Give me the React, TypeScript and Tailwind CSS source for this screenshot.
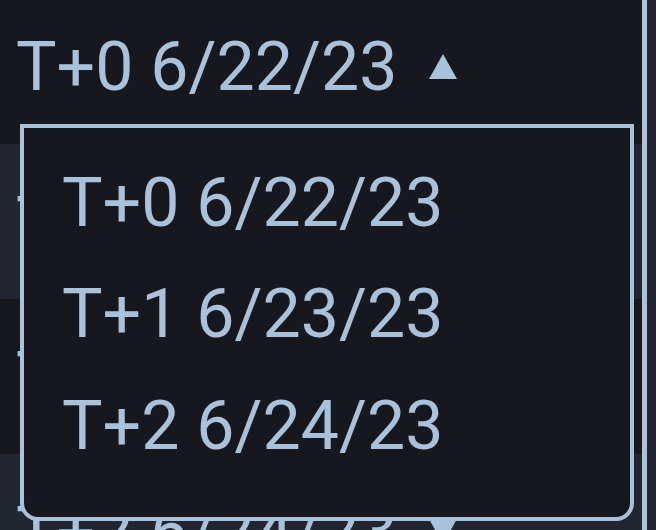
import React from "react";

const rows = [
  { label: "T+0 6/22/23", open: true },
  { label: "T+0 6/22/23", open: false },
  { label: "T+1 6/23/23", open: false },
  { label: "T+2 6/24/23", open: false },
];

const options = ["T+0 6/22/23", "T+1 6/23/23", "T+2 6/24/23"];

const Caret: React.FC<{ up: boolean }> = ({ up }) => (
  <svg width="28" height="25" viewBox="0 0 28 25" className="ml-[32px] shrink-0">
    {up ? (
      <polygon points="14,0 28,25 0,25" fill="#a9c2db" />
    ) : (
      <polygon points="0,0 28,0 14,25" fill="#a9c2db" />
    )}
  </svg>
);

const App: React.FC = () => {
  return (
    <div
      className="relative w-[656px] h-[530px] overflow-hidden bg-[#17181d] text-[#a9c2db]"
      style={{ fontFamily: "Roboto, 'Noto Sans', sans-serif" }}
    >
      <div className="flex h-full">
        <div className="w-[642px] flex flex-col -mt-[11px]">
          {rows.map((row, i) => (
            <div
              key={i}
              className={`h-[155px] shrink-0 flex items-center pl-[16px] ${
                i % 2 === 1 ? "bg-[#222630]" : "bg-[#17181d]"
              }`}
            >
              <span className="text-[68px] leading-none">{row.label}</span>
              <Caret up={row.open} />
            </div>
          ))}
        </div>
        <div className="w-[5px] bg-[#a9c2db]" />
        <div className="flex-1 bg-[#222630]" />
      </div>

      <div className="absolute left-[20px] top-[124px] w-[614px] h-[397px] border-[4px] border-[#a9c2db] rounded-b-[18px] bg-[#17181d] pt-[19px] pl-[38px]">
        {options.map((opt) => (
          <div key={opt} className="h-[111.5px] flex items-center text-[68px] leading-none">
            {opt}
          </div>
        ))}
      </div>
    </div>
  );
};

export default App;
